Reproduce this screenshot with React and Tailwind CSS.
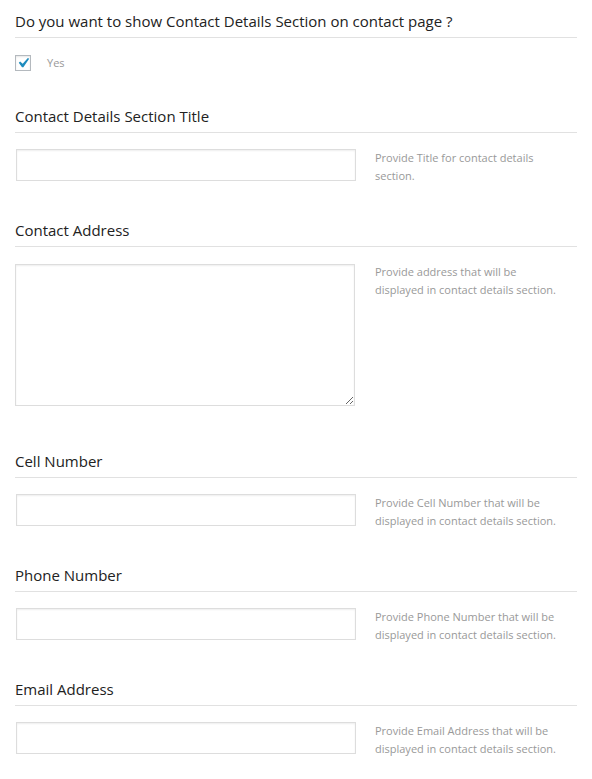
import React from 'react';

const fields = [
  { label: 'Contact Details Section Title', help: 'Provide Title for contact details section.' },
  { label: 'Contact Address', help: 'Provide address that will be displayed in contact details section.', area: true },
  { label: 'Cell Number', help: 'Provide Cell Number that will be displayed in contact details section.' },
  { label: 'Phone Number', help: 'Provide Phone Number that will be displayed in contact details section.' },
  { label: 'Email Address', help: 'Provide Email Address that will be displayed in contact details section.' },
];

const Heading = ({ children }) => (
  <h3 className="text-[15px] leading-[20px] text-[#222] pb-[6px] border-b border-[#e1e1e1]">{children}</h3>
);

const Field = ({ label, help, area, first }) => (
  <div className={first ? 'mt-[34px]' : 'mt-[35px]'}>
    <Heading>{label}</Heading>
    <div className="flex items-start mt-[16px]">
      {area ? (
        <textarea className="block w-[340px] h-[142px] mt-px border border-[#dddddd] bg-white shadow-[inset_0_1px_2px_rgba(0,0,0,0.07)] outline-none" />
      ) : (
        <input
          type="text"
          className="block w-[340px] h-[32px] ml-px border border-[#dddddd] bg-white shadow-[inset_0_1px_2px_rgba(0,0,0,0.07)] outline-none"
        />
      )}
      <p className={`w-[190px] text-[11px] leading-[18px] text-[#999] ${area ? 'ml-[20px]' : 'ml-[19px]'}`}>{help}</p>
    </div>
    {area && <div className="h-[10px]" />}
  </div>
);

export default function App() {
  return (
    <div className="bg-white px-[15px] pt-[11px] pb-[25px] w-[592px]" style={{ fontFamily: '"Open Sans", sans-serif' }}>
      <Heading>Do you want to show Contact Details Section on contact page ?</Heading>
      <label className="flex items-center mt-[17px]">
        <span className="flex items-center justify-center w-[16px] h-[16px] border border-[#b4b9be] bg-white shadow-[inset_0_1px_2px_rgba(0,0,0,0.1)] overflow-visible">
          <svg width="20" height="20" viewBox="0 0 20 20" className="shrink-0 -m-[3px]">
            <path d="M14.83 4.89l1.34.94-5.81 8.38H9.02L5.78 9.67l1.34-1.25 2.57 2.4z" fill="#1e8cbe" />
          </svg>
        </span>
        <span className="ml-[16px] text-[11px] text-[#999]">Yes</span>
      </label>
      {fields.map((f, i) => (
        <Field key={f.label} first={i === 0} {...f} />
      ))}
    </div>
  );
}
